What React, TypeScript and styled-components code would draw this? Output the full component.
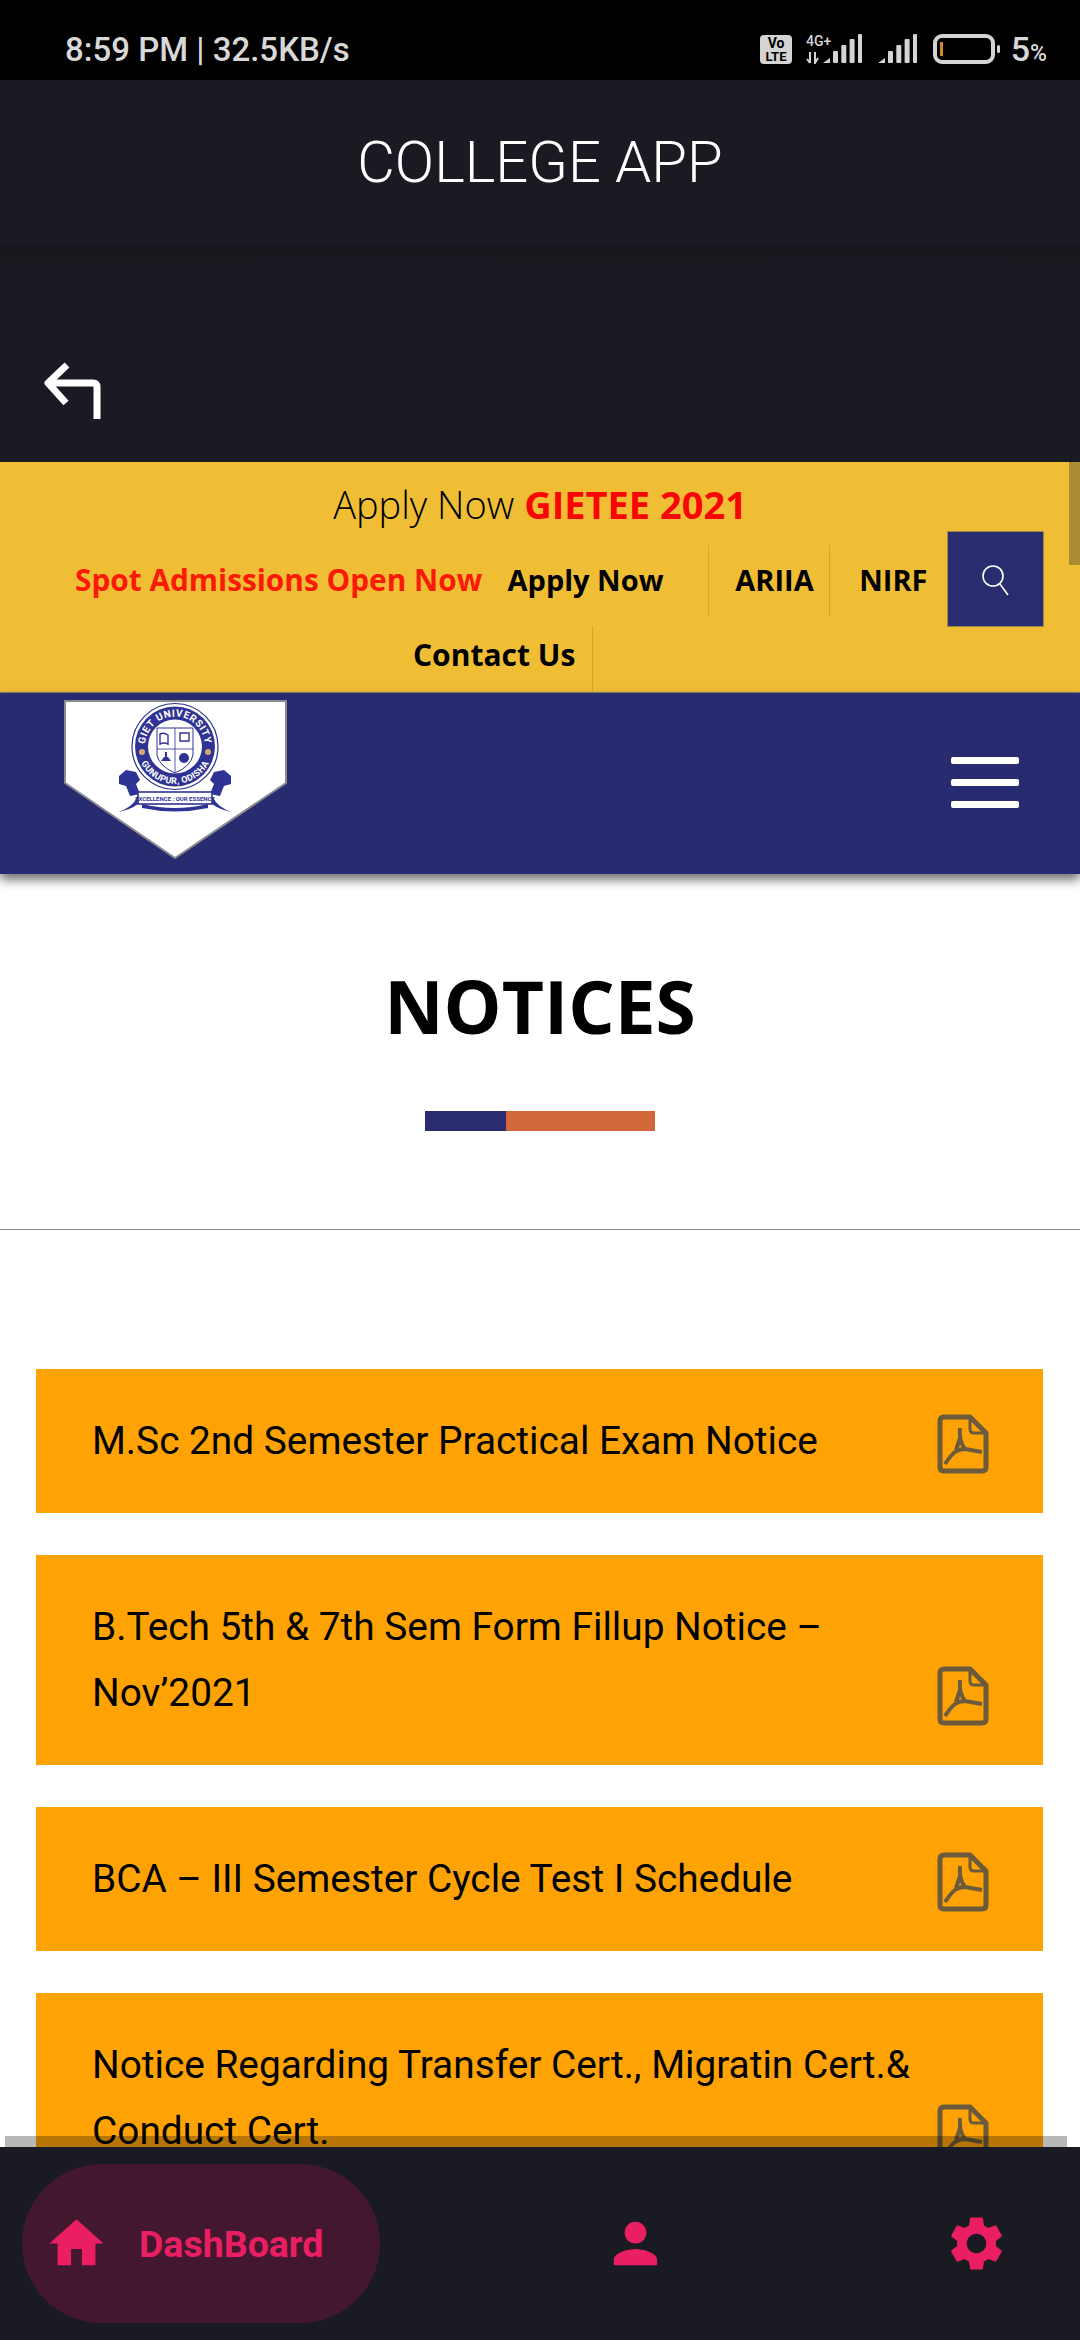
import React from 'react';
import styled, { createGlobalStyle } from 'styled-components';
import { MdHome, MdPerson, MdSettings } from 'react-icons/md';

const GlobalStyle = createGlobalStyle`
  html, body {
    margin: 0;
    padding: 0;
    background: #fff;
    font-family: Roboto, "Liberation Sans", sans-serif;
  }
`;

const Page = styled.div`
  position: relative;
  width: 1080px;
  height: 2340px;
  overflow: hidden;
  background: #fff;
`;

const StatusBar = styled.div`
  height: 80px;
  box-sizing: border-box;
  padding: 18px 33px 0 65px;
  background: #000;
  color: #d8d8d8;
  display: flex;
  align-items: center;
  justify-content: space-between;
`;

const Clock = styled.span`
  font-size: 33px;
  font-weight: 500;
  white-space: pre;
`;

const StatusRight = styled.div`
  display: flex;
  align-items: center;
  gap: 16px;
`;

const BatteryText = styled.span`
  margin-left: -6px;
  font-size: 34px;
  font-weight: 500;
  small {
    font-size: 23px;
  }
`;

const AppHeader = styled.header`
  height: 164px;
  background: #1a1a22;
  color: #fff;
  display: flex;
  align-items: center;
  justify-content: center;
  font-size: 58px;
  font-weight: 300;
`;

const BackArea = styled.div`
  height: 218px;
  box-sizing: border-box;
  padding: 117px 0 0 43px;
  background: linear-gradient(#17171d, #1a1a22 26px);
`;

const TopBar = styled.div`
  height: 230px;
  box-sizing: border-box;
  background: #efbe35;
  font-family: "Open Sans", sans-serif;
  display: flex;
  flex-direction: column;
`;

const ApplyLine = styled.div`
  height: 70px;
  box-sizing: border-box;
  padding-top: 17px;
  text-align: center;
  font-size: 38px;
  line-height: 50px;
  font-weight: 300;
  color: #000;
  b {
    font-weight: 700;
    color: #fa0505;
  }
`;

const LinkRow = styled.div`
  height: 94px;
  box-sizing: border-box;
  padding: 0 37px 0 75px;
  display: flex;
  align-items: center;
`;

const NavLink = styled.span<{ $width: number; $red?: boolean; $divider?: boolean; $inset?: number }>`
  box-sizing: border-box;
  width: ${(p) => p.$width}px;
  height: 72px;
  margin-top: 4px;
  padding-left: ${(p) => p.$inset ?? 0}px;
  padding-bottom: 3px;
  display: flex;
  align-items: center;
  font-size: ${(p) => (p.$red ? 29.8 : 29)}px;
  font-weight: 700;
  white-space: nowrap;
  color: ${(p) => (p.$red ? '#fa1a05' : '#000')};
  border-right: ${(p) => (p.$divider ? '1px solid #d2a630' : 'none')};
`;

const SearchBox = styled.div`
  width: 95px;
  height: 94px;
  background: #2a2c70;
  display: flex;
  align-items: center;
  justify-content: center;
  box-shadow: 0 0 0 1px rgba(80, 80, 110, 0.5);
`;

const ContactRow = styled.div`
  flex: 1;
  display: flex;
  padding-left: 413px;
`;

const ContactLink = styled.span`
  width: 180px;
  box-sizing: border-box;
  padding-bottom: 10px;
  display: flex;
  align-items: center;
  font-size: 30px;
  font-weight: 700;
  color: #000;
  border-right: 1px solid #d2a630;
`;

const ScrollThumb = styled.div`
  position: absolute;
  top: 462px;
  right: 0;
  width: 11px;
  height: 103px;
  background: #ab8b32;
`;

const BrandBar = styled.div`
  height: 182px;
  box-sizing: border-box;
  padding: 7px 61px 0 64px;
  background: #282b6f;
  border-top: 1px solid #77766a;
  box-shadow: 0 6px 10px rgba(0, 0, 0, 0.55);
  position: relative;
  display: flex;
  justify-content: space-between;
  align-items: flex-start;
`;

const Burger = styled.div`
  margin-top: 57px;
  width: 68px;
  display: flex;
  flex-direction: column;
  gap: 15px;
  span {
    height: 7px;
    border-radius: 2px;
    background: #fff;
  }
`;

const TitleBlock = styled.section`
  height: 356px;
  box-sizing: border-box;
  padding-top: 83px;
  border-bottom: 1px solid #8d8d8d;
  display: flex;
  flex-direction: column;
  align-items: center;
`;

const Title = styled.h1`
  margin: 0;
  font-family: "Open Sans", sans-serif;
  font-size: 73px;
  line-height: 98px;
  font-weight: 700;
  color: #000;
`;

const TitleBar = styled.div`
  margin-top: 56px;
  width: 230px;
  height: 20px;
  display: flex;
  &::before {
    content: '';
    width: 81px;
    background: #2a2c70;
  }
  &::after {
    content: '';
    flex: 1;
    background: #d2673a;
  }
`;

const NoticeList = styled.div`
  padding: 139px 37px 0 36px;
  display: flex;
  flex-direction: column;
  gap: 42px;
`;

const NoticeCard = styled.div`
  box-sizing: border-box;
  padding: 39px 54px 39px 56px;
  background: #ffa305;
  display: flex;
  justify-content: space-between;
`;

const NoticeText = styled.div`
  width: 830px;
  font-size: 38.8px;
  line-height: 66px;
  color: #000;
`;

const PdfSlot = styled.div`
  align-self: flex-end;
  width: 52px;
  height: 60px;
`;

const BottomShade = styled.div`
  position: absolute;
  left: 5px;
  right: 13px;
  bottom: 193px;
  height: 11px;
  background: rgba(0, 0, 0, 0.28);
`;

const BottomNav = styled.nav`
  position: absolute;
  left: 0;
  right: 0;
  bottom: 0;
  height: 193px;
  box-sizing: border-box;
  padding: 17px 0 17px 22px;
  background: #1a1a22;
  color: #e91e63;
  display: flex;
  align-items: stretch;
`;

const ActivePill = styled.div`
  width: 358px;
  box-sizing: border-box;
  padding-left: 22px;
  border-radius: 80px;
  background: #43182f;
  display: flex;
  align-items: center;
  gap: 30px;
  font-size: 37.5px;
  font-weight: 700;
`;

const NavIcon = styled.div<{ $left: number }>`
  margin-left: ${(p) => p.$left}px;
  display: flex;
  align-items: center;
`;

const BackArrow = () => (
  <svg width="60" height="60" viewBox="0 0 60 60" fill="none" stroke="#fff" strokeWidth="7" strokeLinejoin="round">
    <path d="M24 4 L5 22 L23 42" />
    <path d="M5 22 H50 Q54 22 54 26 V58" />
  </svg>
);

const SignalBars = ({ x }: { x: number }) => (
  <g fill="#d4d4d4" transform={`translate(${x} 0)`}>
    <path d="M0 29 L7 24 V29 Z" />
    <rect x="10" y="17" width="5" height="12" rx="1" />
    <rect x="18.3" y="11" width="5" height="18" rx="1" />
    <rect x="26.6" y="5" width="5" height="24" rx="1" />
    <rect x="35" y="0" width="4" height="29" rx="1" />
  </g>
);

const StatusIcons = () => (
  <svg width="157" height="30" viewBox="0 0 157 30" fontFamily="Roboto, sans-serif" fill="#d4d4d4">
    <rect x="0" y="1" width="32" height="29" rx="4" />
    <text x="16" y="14" textAnchor="middle" fontSize="14" fontWeight="700" fill="#000">Vo</text>
    <text x="16" y="27" textAnchor="middle" fontSize="13" fontWeight="700" fill="#000">LTE</text>
    <text x="46" y="12" fontSize="14" fontWeight="500">4G+</text>
    <path d="M50 18 V29 M47 25 L50 29 M55 18 V29 L58 24" stroke="#d4d4d4" strokeWidth="2" fill="none" />
    <SignalBars x={63} />
    <SignalBars x={118} />
  </svg>
);

const Battery = () => (
  <svg width="68" height="30" viewBox="0 0 68 30" fill="none">
    <rect x="2" y="2" width="58" height="26" rx="7" stroke="#d4d4d4" strokeWidth="4" />
    <rect x="7" y="8" width="3" height="14" fill="#cf8a2e" />
    <rect x="64" y="11" width="3" height="8" rx="1.5" fill="#d4d4d4" />
  </svg>
);

const SearchIcon = () => (
  <svg width="32" height="36" viewBox="0 0 32 36" fill="none" stroke="#fff" strokeWidth="1.6">
    <circle cx="13" cy="15" r="10" />
    <path d="M20 23 L28 34" />
  </svg>
);

const PdfIcon = () => (
  <svg width="52" height="60" viewBox="0 0 52 60" fill="none" stroke="#6b5a3c" strokeWidth="5" strokeLinejoin="round">
    <path d="M7 3 H33 L49 19 V53 Q49 57 45 57 H7 Q3 57 3 53 V7 Q3 3 7 3 Z" />
    <path d="M33 4 V15 Q33 19 37 19 H48" strokeWidth="3" />
    <path d="M23 14 C22 24 24 30 28 35 L45 38 M28 35 C20 35 16 38 8 50 M23 24 L19 36" strokeWidth="4" />
  </svg>
);

const Logo = () => (
  <svg width="223" height="160" viewBox="0 0 223 160">
    <path d="M1 1 H222 V83 L111 158 L1 83 Z" fill="#fff" stroke="#8a8a8f" strokeWidth="2" />
    <defs>
      <path id="seal-top" d="M81.5 52 A30 30 0 1 1 140.5 52" />
      <path id="seal-bottom" d="M73.5 52 A38 38 0 0 0 148.5 52" />
    </defs>
    {/* lions sit behind the seal */}
    <path d="M55 76 L62 70 L72 72 L76 80 L72 84 L76 94 L66 96 L62 86 L55 84 Z" fill="#2f3494" />
    <path d="M167 76 L160 70 L150 72 L146 80 L150 84 L146 94 L156 96 L160 86 L167 84 Z" fill="#2f3494" />
    <circle cx="111" cy="46.5" r="43" fill="#fff" stroke="#2a2f8f" strokeWidth="1.2" />
    <circle cx="111" cy="46.5" r="40" fill="#2f3494" />
    <circle cx="111" cy="46.5" r="27" fill="#fff" />
    <text fontFamily="Roboto, sans-serif" fontSize="10" fontWeight="700" fill="#fff" letterSpacing="0.6">
      <textPath href="#seal-top" startOffset="50%" textAnchor="middle">GIET UNIVERSITY</textPath>
    </text>
    <text fontFamily="Roboto, sans-serif" fontSize="9" fontWeight="700" fill="#fff" letterSpacing="0.3">
      <textPath href="#seal-bottom" startOffset="50%" textAnchor="middle">GUNUPUR, ODISHA</textPath>
    </text>
    <circle cx="78" cy="52" r="3" fill="#d2aa6e" />
    <circle cx="144" cy="52" r="3" fill="#d2aa6e" />
    <path d="M93 28 H129 V55 Q127 66 111 73 Q95 66 93 55 Z" fill="#fff" stroke="#2f3494" strokeWidth="1" />
    <path d="M111 28 V73 M93 49 H129" stroke="#2f3494" strokeWidth="0.8" />
    <path d="M96 34 Q100 32 104 35 V44 Q100 42 96 44 Z M116 33 H125 V41 H116 Z" fill="none" stroke="#2f3494" strokeWidth="1.4" />
    <path d="M97 61 H107 L104 57 H100 Z M101 52 H103 V57 H101 Z" fill="#2f3494" />
    <circle cx="120" cy="58" r="5" fill="#2f3494" />
    <path d="M54 112 Q68 108 74 96 V104 Q66 110 54 112 Z M168 112 Q154 108 148 96 V104 Q156 110 168 112 Z" fill="#2f3494" />
    <path d="M78 104 Q111 112 144 104 V108 Q111 115 78 108 Z" fill="#2f3494" />
    <rect x="74" y="92" width="74" height="12" fill="#fff" stroke="#2f3494" strokeWidth="1.6" />
    <text x="111" y="100.5" textAnchor="middle" fontFamily="Roboto, sans-serif" fontSize="6" fontWeight="700" fill="#2f3494">EXCELLENCE : OUR ESSENCE</text>
  </svg>
);

const notices = [
  'M.Sc 2nd Semester Practical Exam Notice',
  'B.Tech 5th & 7th Sem Form Fillup Notice – Nov’2021',
  'BCA – III Semester Cycle Test I Schedule',
  'Notice Regarding Transfer Cert., Migratin Cert.& Conduct Cert.',
];

export default function App() {
  return (
    <Page>
      <GlobalStyle />
      <StatusBar>
        <Clock>8:59 PM | 32.5KB/s</Clock>
        <StatusRight>
          <StatusIcons />
          <Battery />
          <BatteryText>
            5<small>%</small>
          </BatteryText>
        </StatusRight>
      </StatusBar>
      <AppHeader>COLLEGE APP</AppHeader>
      <BackArea>
        <BackArrow />
      </BackArea>
      <TopBar>
        <ApplyLine>
          Apply Now <b>GIETEE 2021</b>
        </ApplyLine>
        <LinkRow>
          <NavLink $width={433} $red>Spot Admissions Open Now</NavLink>
          <NavLink $width={202} $divider>Apply Now</NavLink>
          <NavLink $width={121} $inset={26} $divider>ARIIA</NavLink>
          <NavLink $width={118} $inset={29}>NIRF</NavLink>
          <SearchBox>
            <SearchIcon />
          </SearchBox>
        </LinkRow>
        <ContactRow>
          <ContactLink>Contact Us</ContactLink>
        </ContactRow>
      </TopBar>
      <ScrollThumb />
      <BrandBar>
        <Logo />
        <Burger>
          <span />
          <span />
          <span />
        </Burger>
      </BrandBar>
      <TitleBlock>
        <Title>NOTICES</Title>
        <TitleBar />
      </TitleBlock>
      <NoticeList>
        {notices.map((n) => (
          <NoticeCard key={n}>
            <NoticeText>{n}</NoticeText>
            <PdfSlot>
              <PdfIcon />
            </PdfSlot>
          </NoticeCard>
        ))}
      </NoticeList>
      <BottomShade />
      <BottomNav>
        <ActivePill>
          <MdHome size={65} />
          DashBoard
        </ActivePill>
        <NavIcon $left={223}>
          <MdPerson size={65} />
        </NavIcon>
        <NavIcon $left={276}>
          <MdSettings size={65} />
        </NavIcon>
      </BottomNav>
    </Page>
  );
}
